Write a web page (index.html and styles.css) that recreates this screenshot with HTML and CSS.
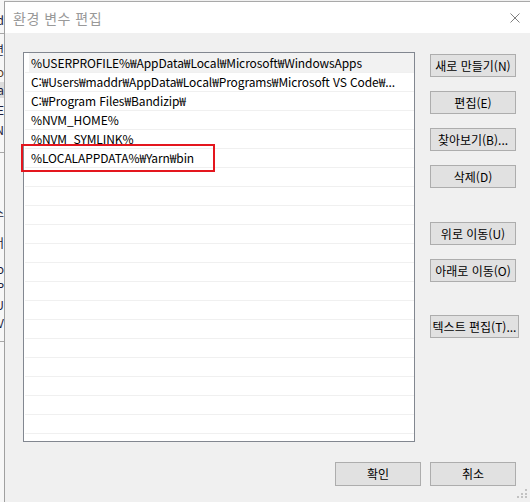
FILE: index.html
```html
<!DOCTYPE html>
<html lang="ko">
<head>
<meta charset="utf-8">
<title>환경 변수 편집</title>
<link rel="stylesheet" href="styles.css">
</head>
<body>
<div class="screen">
  <div class="bg-strip">
    <div class="frag f1">d</div>
    <div class="frag-line l1"></div>
    <div class="frag f2">변</div>
    <div class="frag f3">o</div>
    <div class="frag f4">a</div>
    <div class="frag f5">E</div>
    <div class="frag f6">N</div>
    <div class="frag-line l2"></div>
    <div class="frag f7">스</div>
    <div class="frag f8">버</div>
    <div class="frag f9">o</div>
    <div class="frag f10">P</div>
    <div class="frag f11">U</div>
    <div class="frag f12">V</div>
    <div class="frag-line l3"></div>
  </div>
  <div class="dialog">
    <div class="titlebar">
      <span class="title">환경 변수 편집</span>
      <svg class="close" width="10" height="10" viewBox="0 0 10 10"><path d="M0.5 0.5 L9.5 9.5 M9.5 0.5 L0.5 9.5" stroke="#808080" stroke-width="1" fill="none"/></svg>
    </div>
    <div class="content">
      <div class="main">
        <div class="list">
          <div class="row first"><div class="cell">%USERPROFILE%₩AppData₩Local₩Microsoft₩WindowsApps</div></div>
          <div class="row"><div class="cell">C:₩Users₩maddr₩AppData₩Local₩Programs₩Microsoft VS Code₩...</div></div>
          <div class="row"><div class="cell">C:₩Program Files₩Bandizip₩</div></div>
          <div class="row"><div class="cell">%NVM_HOME%</div></div>
          <div class="row"><div class="cell">%NVM_SYMLINK%</div></div>
          <div class="row"><div class="cell">%LOCALAPPDATA%₩Yarn₩bin</div></div>
          <div class="row"><div class="cell"></div></div>
          <div class="row"><div class="cell"></div></div>
          <div class="row"><div class="cell"></div></div>
          <div class="row"><div class="cell"></div></div>
          <div class="row"><div class="cell"></div></div>
          <div class="row"><div class="cell"></div></div>
          <div class="row"><div class="cell"></div></div>
          <div class="row"><div class="cell"></div></div>
          <div class="row"><div class="cell"></div></div>
          <div class="row"><div class="cell"></div></div>
          <div class="row"><div class="cell"></div></div>
          <div class="row"><div class="cell"></div></div>
          <div class="row"><div class="cell"></div></div>
          <div class="row"><div class="cell"></div></div>
          <div class="mark"></div>
        </div>
        <div class="side">
          <button class="btn">새로 만들기(N)</button>
          <button class="btn">편집(E)</button>
          <button class="btn">찾아보기(B)...</button>
          <button class="btn">삭제(D)</button>
          <button class="btn group2">위로 이동(U)</button>
          <button class="btn">아래로 이동(O)</button>
          <button class="btn group3 wide">텍스트 편집(T)...</button>
        </div>
      </div>
      <div class="footer">
        <button class="btn big">확인</button>
        <button class="btn big">취소</button>
      </div>
    </div>
    <svg class="grip" width="12" height="12" viewBox="0 0 12 12">
      <rect x="8" y="0" width="2" height="2" fill="#c2c2c2"/>
      <rect x="4" y="4" width="2" height="2" fill="#c2c2c2"/>
      <rect x="8" y="4" width="2" height="2" fill="#c2c2c2"/>
      <rect x="0" y="7" width="2" height="2" fill="#c2c2c2"/>
      <rect x="4" y="7" width="2" height="2" fill="#c2c2c2"/>
      <rect x="8" y="7" width="2" height="2" fill="#c2c2c2"/>
    </svg>
  </div>
</div>
</body>
</html>
```

FILE: styles.css
```css
html, body {
  margin: 0;
  padding: 0;
}
body {
  width: 530px;
  height: 502px;
  overflow: hidden;
  background: #f0f0f0;
  font-family: "Noto Sans CJK KR", "Noto Sans", sans-serif;
  font-size: 12px;
  color: #000;
}
.screen {
  display: flex;
  height: 502px;
}
.bg-strip {
  width: 4px;
  flex: none;
  background: #f7f7f7;
  overflow: hidden;
  display: flex;
  flex-direction: column;
  align-items: flex-end;
  padding-top: 12px;
  box-sizing: border-box;
}
.frag {
  font-size: 12px;
  line-height: 16px;
  height: 16px;
  margin-bottom: 2px;
  width: 16px;
  text-align: right;
  white-space: nowrap;
  overflow: hidden;
  flex: none;
  color: #1b1b3a;
}
.frag-line {
  width: 4px;
  height: 1px;
  background: #a8a8a8;
  flex: none;
}
.l1 { margin-top: 3px; margin-bottom: 8px; }
.f3 { color: #5a3a20; margin-top: 4px; }
.f4 { background: #dcdcdc; }
.f5 { margin-top: 2px; }
.f6 { margin-top: 2px; }
.l2 { margin-top: 12px; margin-bottom: 52px; }
.f8 { margin-top: 12px; }
.f9 { margin-top: 8px; }
.l3 { margin-top: 8px; }
.dialog {
  flex: 1;
  position: relative;
  margin-top: 1px;
  border-top: 1px solid #a9a9a9;
  border-left: 1px solid #a0a0a0;
  display: flex;
  flex-direction: column;
}
.titlebar {
  height: 31px;
  background: #fff;
  display: flex;
  align-items: center;
  justify-content: space-between;
  padding: 0 10px 0 8px;
  flex: none;
}
.title {
  font-size: 14px;
  letter-spacing: 0.5px;
  color: #999;
}
.close {
  display: block;
}
.content {
  padding: 19px 0 0 18px;
}
.main {
  display: flex;
  align-items: flex-start;
  gap: 15px;
}
.list {
  position: relative;
  width: 392px;
  height: 390px;
  box-sizing: border-box;
  border: 1px solid #828790;
  background: #fff;
  overflow: visible;
}
.row {
  margin-left: 1px;
  height: 18px;
  border-bottom: 1px solid #f0f0f0;
}
.row.first {
  height: 19px;
}
.cell {
  margin-left: 4px;
  padding-left: 2px;
  height: 18px;
  line-height: 18px;
  white-space: nowrap;
  overflow: hidden;
  letter-spacing: -0.1px;
}
.first .cell {
  height: 18px;
  padding-top: 1px;
  background: #f2f2f2;
}
.mark {
  position: absolute;
  left: -3px;
  top: 91px;
  width: 194px;
  height: 28px;
  box-sizing: border-box;
  border: 2px solid #e4161e;
}
.side {
  display: flex;
  flex-direction: column;
  margin-top: 2px;
  width: 89px;
}
.btn {
  width: 86px;
  height: 23px;
  box-sizing: border-box;
  border: 1px solid #adadad;
  background: #e1e1e1;
  font-family: "Noto Sans CJK KR", "Noto Sans", sans-serif;
  font-size: 12px;
  color: #000;
  padding: 0;
  margin: 0;
  white-space: nowrap;
  text-align: center;
  line-height: 21px;
}
.side .btn + .btn {
  margin-top: 14px;
}
.side .btn.group2 {
  margin-top: 34px;
}
.side .btn.group3 {
  margin-top: 33px;
}
.btn.wide {
  width: 89px;
}
.footer {
  display: flex;
  justify-content: flex-end;
  gap: 9px;
  margin-top: 20px;
  padding-right: 14px;
}
.btn.big {
  height: 24px;
  line-height: 22px;
}
.grip {
  position: absolute;
  right: 1px;
  bottom: 1px;
}
```
